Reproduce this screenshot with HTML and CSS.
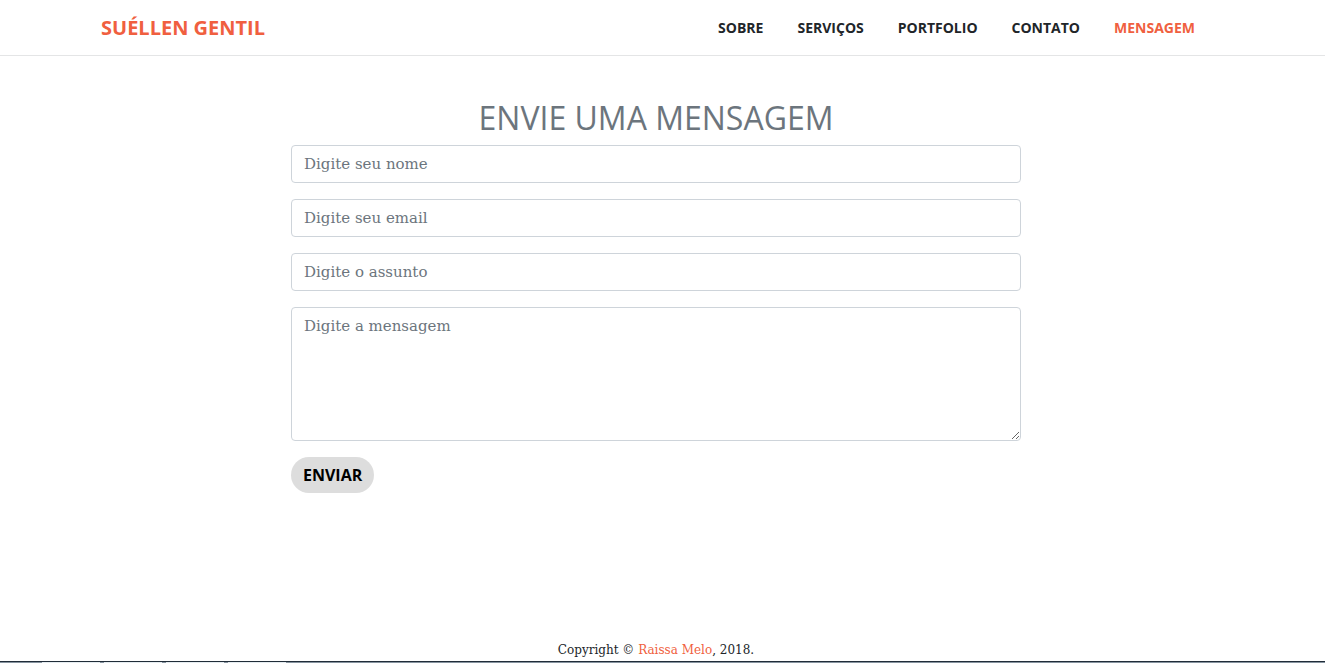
FILE: index.html
```html
<!DOCTYPE html>
<html lang="pt-BR">
<head>
<meta charset="utf-8">
<meta name="viewport" content="width=device-width, initial-scale=1">
<title>Suéllen Gentil</title>
<link rel="stylesheet" href="styles.css">
</head>
<body>
<header class="site-header">
  <nav class="container navbar">
    <a class="brand" href="#">SUÉLLEN GENTIL</a>
    <ul class="menu">
      <li><a class="menu-link" href="#">SOBRE</a></li>
      <li><a class="menu-link" href="#">SERVIÇOS</a></li>
      <li><a class="menu-link" href="#">PORTFOLIO</a></li>
      <li><a class="menu-link" href="#">CONTATO</a></li>
      <li><a class="menu-link active" href="#">MENSAGEM</a></li>
    </ul>
  </nav>
</header>
<main class="message">
  <h1 class="title">ENVIE UMA MENSAGEM</h1>
  <form class="form">
    <input class="field" type="text" placeholder="Digite seu nome" aria-label="Nome">
    <input class="field" type="email" placeholder="Digite seu email" aria-label="Email">
    <input class="field" type="text" placeholder="Digite o assunto" aria-label="Assunto">
    <textarea class="field" rows="5" placeholder="Digite a mensagem" aria-label="Mensagem"></textarea>
    <button class="send" type="button">ENVIAR</button>
  </form>
</main>
<footer class="footer">Copyright © <a class="credit" href="#">Raissa Melo</a>, 2018.</footer>
<div class="taskbar"><span class="task"></span><span class="task"></span><span class="task"></span><span class="task"></span></div>
</body>
</html>
```
FILE: styles.css
```css
* { box-sizing: border-box; }

body {
  display: flex;
  flex-direction: column;
  min-height: 100vh;
  margin: 0;
  background: #fff;
  color: #212529;
  font-family: "DejaVu Serif", serif;
  font-size: 15px;
}

a { text-decoration: none; }

.site-header {
  padding-right: 13px;
  border-bottom: 1px solid #e4e5e6;
  font-family: "Open Sans", sans-serif;
  font-weight: 700;
}

.container {
  max-width: 1140px;
  margin: 0 auto;
  padding: 0 15px;
}

.navbar {
  display: flex;
  align-items: center;
  justify-content: space-between;
  min-height: 55px;
}

.brand {
  color: #f05f40;
  font-size: 20px;
  line-height: 28px;
}

.menu {
  display: flex;
  gap: 2px;
  margin: 0;
  padding: 0;
  list-style: none;
}

.menu-link {
  display: block;
  padding: 0 16px;
  color: #212529;
  font-size: 14px;
  line-height: 21px;
}

.menu-link.active { color: #f05f40; }

.message {
  flex: 1;
  width: 100%;
  padding: 43px 13px 0 0;
}

.title {
  margin: 0 0 8px;
  color: #6c757d;
  font: 400 32px/38px "Open Sans", sans-serif;
  text-align: center;
}

.form {
  display: flex;
  flex-direction: column;
  align-items: flex-start;
  gap: 16px;
  max-width: 730px;
  margin: 0 auto;
}

.field {
  display: block;
  width: 100%;
  padding: 6px 12px;
  border: 1px solid #ced4da;
  border-radius: 4px;
  background: #fff;
  color: #495057;
  font: inherit;
  line-height: 24px;
}

.field::placeholder {
  color: #6c757d;
  opacity: 1;
}

textarea.field { resize: vertical; }

.send {
  padding: 6px 12px;
  border: 0;
  border-radius: 18px;
  background: #ddd;
  color: #000;
  font: 700 16px/24px "Open Sans", sans-serif;
}

.footer {
  padding: 0 13px 0 0;
  font-size: 12px;
  line-height: 22px;
  text-align: center;
}

.credit { color: #f05f40; }

.taskbar {
  display: flex;
  gap: 4px;
  height: 2px;
  padding-left: 42px;
  border-top: 1px solid #202c38;
  background: #8794a0;
}

.task {
  width: 58px;
  background: #e6edf1;
}
```
